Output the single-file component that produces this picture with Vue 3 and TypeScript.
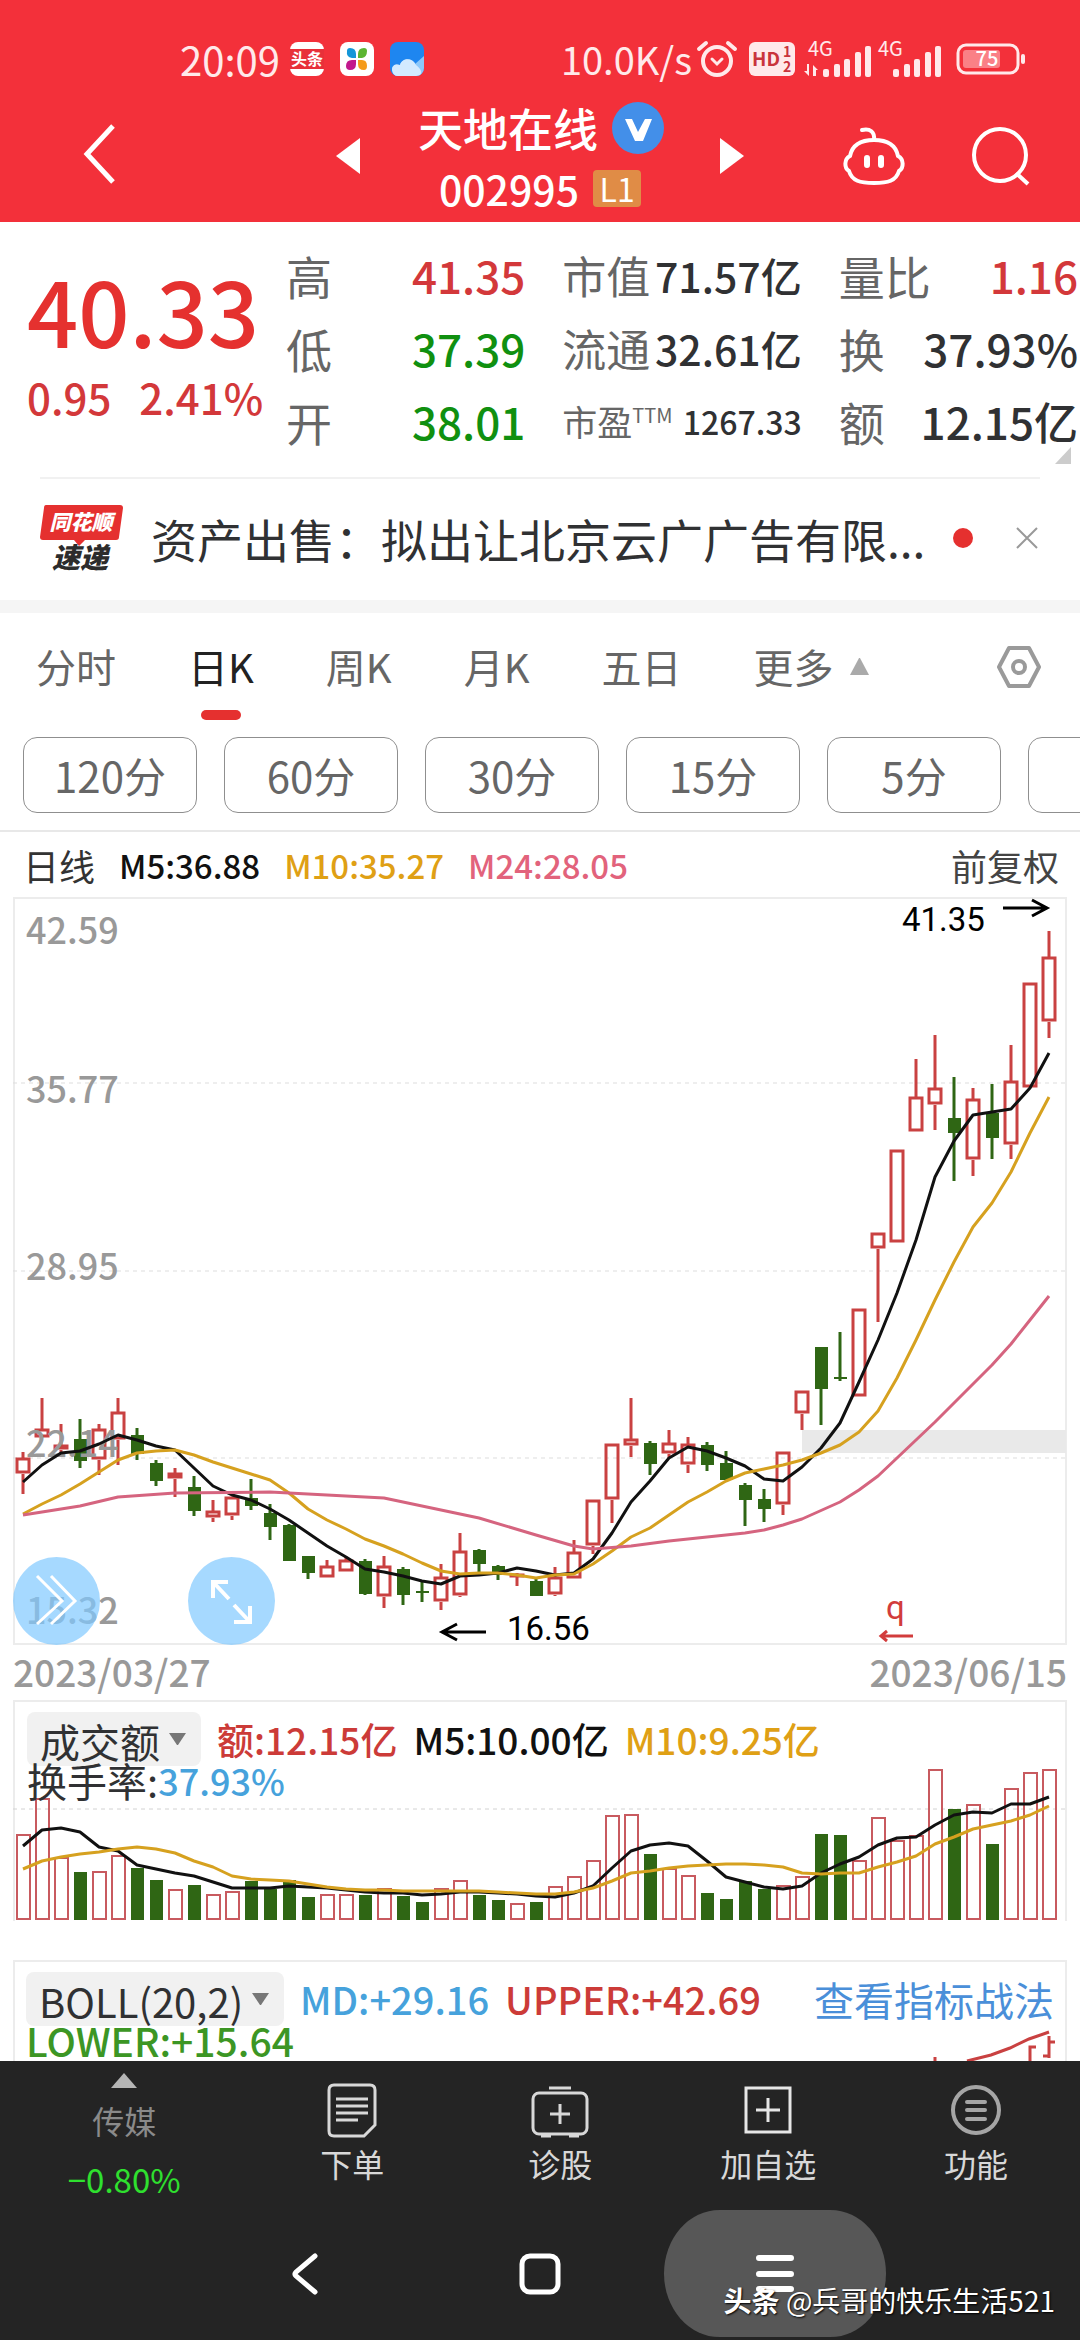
<script setup lang="ts">
import { ref } from 'vue'

type Dir = 'up' | 'down'
/** direction, wick top, body top, body bottom, wick bottom */
type Candle = [Dir, number, number, number, number]

const STEP = 19
const FIRST = 10
const cx = (i: number): number => FIRST + i * STEP

const u: Dir = 'up'
const d: Dir = 'down'

const candles: Candle[] = [
  [u, 555, 561, 577, 597], [u, 501, 532, 541, 541], [u, 527, 548, 553, 556], [d, 522, 542, 564, 571],
  [u, 527, 532, 563, 578], [u, 501, 515, 543, 568], [d, 531, 538, 557, 563], [d, 563, 566, 584, 589],
  [u, 571, 576, 582, 600], [d, 579, 590, 614, 619], [u, 603, 614, 621, 625], [u, 600, 600, 619, 623],
  [d, 582, 601, 609, 613], [d, 607, 616, 630, 643], [d, 627, 628, 664, 664], [d, 659, 659, 676, 682],
  [u, 663, 669, 681, 681], [u, 660, 663, 675, 675], [d, 662, 664, 697, 698], [u, 659, 669, 700, 711],
  [d, 670, 672, 698, 708], [d, 685, 694, 696, 705], [u, 667, 680, 705, 713], [u, 636, 654, 699, 700],
  [d, 652, 653, 667, 675], [d, 668, 669, 678, 683], [u, 676, 677, 679, 689], [d, 682, 684, 699, 699],
  [u, 670, 680, 698, 699], [u, 643, 655, 682, 682], [u, 603, 603, 649, 657], [u, 547, 547, 603, 626],
  [u, 501, 542, 549, 560], [d, 544, 546, 567, 578], [u, 533, 546, 557, 561], [u, 540, 547, 568, 576],
  [d, 545, 548, 568, 574], [d, 554, 566, 583, 583], [d, 586, 588, 603, 629], [d, 592, 602, 612, 625],
  [u, 555, 555, 608, 618], [u, 494, 494, 517, 533], [d, 450, 450, 492, 528], [d, 435, 480, 482, 484],
  [u, 412, 412, 500, 500], [u, 336, 336, 352, 425], [u, 253, 253, 346, 346], [u, 162, 200, 235, 235],
  [u, 138, 191, 208, 233], [d, 180, 221, 236, 284], [u, 191, 202, 263, 279], [d, 187, 216, 241, 262],
  [u, 148, 184, 248, 262], [u, 86, 86, 191, 191], [u, 34, 60, 125, 141],
]

const volumeTops: number[] = [
  134, 98, 157, 172, 171, 155, 168, 180, 189, 185, 194, 191, 181, 189, 180, 197, 194, 194, 195, 188,
  196, 202, 188, 180, 195, 200, 203, 202, 186, 176, 160, 115, 114, 154, 168, 175, 193, 199, 181, 189,
  185, 176, 134, 135, 160, 117, 140, 135, 69, 109, 104, 144, 88, 72, 69,
]

const ma5: number[] = [
  585, 568, 556, 554, 547, 538, 543, 549, 553, 571, 589, 598, 603, 612, 623, 636, 649, 660, 672, 675,
  679, 684, 687, 679, 678, 676, 671, 674, 678, 676, 662, 636, 605, 584, 561, 550, 554, 561, 569, 582,
  584, 570, 551, 526, 485, 443, 396, 343, 280, 244, 218, 215, 212, 191, 156,
]
const ma10: number[] = [
  617, 607, 598, 587, 575, 563, 556, 554, 553, 558, 565, 571, 577, 583, 596, 612, 623, 632, 642, 649,
  657, 666, 674, 677, 676, 676, 678, 681, 678, 677, 667, 654, 640, 631, 618, 605, 595, 584, 576, 572,
  568, 563, 556, 548, 535, 514, 481, 443, 403, 365, 330, 306, 275, 236, 200,
]
const ma24: [number, number][] = [
  [0, 618], [3, 609], [5, 600], [8, 596], [13, 595], [16, 598], [19, 601], [24, 621], [27, 638],
  [29, 649], [30, 652], [32, 649], [34, 644], [38, 636], [39, 633], [40, 628], [41, 622], [43, 605],
  [44, 593], [45, 579], [46, 561], [48, 525], [51, 468], [52, 447], [53, 423], [54, 399],
]
const vol5: number[] = [
  146, 130, 128, 132, 147, 151, 165, 169, 173, 176, 182, 188, 188, 188, 186, 187, 188, 190, 192, 193,
  193, 195, 194, 192, 192, 193, 194, 196, 197, 193, 186, 168, 151, 145, 143, 146, 161, 177, 182, 187,
  189, 186, 173, 164, 157, 145, 138, 137, 125, 115, 112, 113, 104, 104, 97,
]
const vol10: number[] = [
  169, 161, 157, 154, 152, 149, 147, 149, 153, 161, 167, 176, 179, 180, 181, 184, 187, 189, 190, 190,
  191, 191, 191, 191, 191, 192, 193, 194, 194, 192, 188, 181, 173, 171, 168, 166, 165, 164, 164, 165,
  167, 173, 174, 173, 173, 167, 162, 156, 144, 137, 129, 125, 121, 115, 106,
]

const line = (ys: number[]): string => ys.map((y, i) => `${cx(i)},${y}`).join(' ')
const linePairs = (ps: [number, number][]): string => ps.map(([i, y]) => `${cx(i)},${y}`).join(' ')

const axis = [
  { label: '42.59', y: 47 },
  { label: '35.77', y: 206 },
  { label: '28.95', y: 383 },
  { label: '22.14', y: 560 },
  { label: '15.32', y: 727 },
]

const tabs = ['分时', '日K', '周K', '月K', '五日']
const activeTab = ref('日K')
const periods = ['120分', '60分', '30分', '15分', '5分', '1分']
const volumeIndicator = ref('成交额')
const mainIndicator = ref('BOLL(20,2)')
</script>

<template>
  <div class="app" lang="zh-CN">
    <header class="top">
      <div class="status">
        <div class="status-side">
          <span class="clock">20:09</span>
          <svg class="app-icon" viewBox="0 0 34 34">
            <rect width="34" height="34" rx="8" fill="#fff" />
            <rect y="7" width="34" height="20" fill="#e8303a" />
            <text x="17" y="23" text-anchor="middle" font-size="16" font-weight="700" fill="#fff">头条</text>
          </svg>
          <svg class="app-icon" viewBox="0 0 34 34">
            <rect width="34" height="34" rx="8" fill="#fff" />
            <path d="M7 9Q7 6 10 6Q16 6 16 12V16H12Q6 15 7 9Z" fill="#1496d8" />
            <path d="M18 16V12Q18 6 24 6Q27 6 27 9Q27 15 22 16Z" fill="#5cb531" />
            <path d="M16 18V22Q16 28 10 28Q6 28 6 24Q6 18 12 18Z" fill="#c2188c" />
            <path d="M18 18H22Q27 18 27 24Q27 28 24 28Q18 28 18 22Z" fill="#f59b1a" />
          </svg>
          <svg class="app-icon" viewBox="0 0 34 34">
            <rect width="34" height="34" rx="8" fill="#1e86f0" />
            <path d="M2 28C2 22 7 22 10 23C12 16 22 15 25 22L34 14V26A8 8 0 0 1 26 34H8Q3 34 2 28Z" fill="#8cc8fb" />
            <path d="M2 28C2 22 7 22 10 23C12 16 22 15 26 23C30 26 33 30 30 33L26 34H8Q3 34 2 28Z" fill="#d3eaff" />
          </svg>
        </div>
        <div class="status-side">
          <span class="clock speed">10.0K/s</span>
          <svg class="alarm" viewBox="0 0 40 36" fill="none" stroke="#ffe9ea" stroke-width="4" stroke-linecap="round">
            <circle cx="20" cy="20" r="14" />
            <path d="M2 8L9 2M38 8L31 2" />
            <path d="M15 18l5 5 5-5" stroke-width="3" />
          </svg>
          <svg class="hd" viewBox="0 0 46 34">
            <rect width="46" height="34" rx="6" fill="#ffe9ea" />
            <g fill="#c9343c" font-weight="700">
              <text x="3" y="24" font-size="19">HD</text>
              <text x="34" y="15" font-size="14">1</text>
              <text x="34" y="30" font-size="14">2</text>
            </g>
          </svg>
          <svg class="signal" viewBox="0 0 70 36" fill="#ffe9ea">
            <text x="4" y="15" font-size="20">4G</text>
            <path d="M5 23v12l-5-5h3v-7zM9 35V24l5 5h-2v6z" />
            <rect x="19" y="28" width="6" height="8" rx="2" /><rect x="30" y="23" width="6" height="13" rx="2" />
            <rect x="40" y="18" width="6" height="18" rx="2" /><rect x="51" y="11" width="6" height="25" rx="2" />
            <rect x="61" y="5" width="6" height="31" rx="2" />
          </svg>
          <svg class="signal" viewBox="0 0 70 36" fill="#ffe9ea">
            <text x="4" y="15" font-size="20">4G</text>
            <rect x="19" y="28" width="6" height="8" rx="2" /><rect x="30" y="23" width="6" height="13" rx="2" />
            <rect x="40" y="18" width="6" height="18" rx="2" /><rect x="51" y="11" width="6" height="25" rx="2" />
            <rect x="61" y="5" width="6" height="31" rx="2" />
          </svg>
          <svg class="battery" viewBox="0 0 70 32">
            <rect x="2" y="2" width="60" height="28" rx="8" fill="none" stroke="#ffe9ea" stroke-width="3" />
            <rect x="7" y="7" width="37" height="18" rx="3" fill="#fa8086" />
            <rect x="65" y="11" width="4" height="10" rx="2" fill="#ffe9ea" />
            <text x="31" y="23" text-anchor="middle" font-size="20" font-weight="500" fill="#fff">75</text>
          </svg>
        </div>
      </div>

      <div class="nav">
        <div class="nav-left">
          <button class="icon-btn" type="button" aria-label="返回">
            <svg width="34" height="60" viewBox="0 0 34 60" fill="none" stroke="#fff" stroke-width="5">
              <path d="M30 2L4 30L30 58" />
            </svg>
          </button>
        </div>
        <div class="nav-title">
          <button class="icon-btn" type="button" aria-label="上一只">
            <svg width="24" height="36" viewBox="0 0 24 36" fill="#fff"><path d="M0 18L24 0V36Z" /></svg>
          </button>
          <div class="title">
            <div class="title-row">
              <h1>天地在线</h1>
              <svg width="53" height="53" viewBox="0 0 53 53">
                <circle cx="26" cy="26" r="26" fill="#438fe9" />
                <path d="M13 17H20L26 30L33 17H40L31 39H23Z" fill="#fff" />
              </svg>
            </div>
            <div class="code-row">
              <span class="code">002995</span>
              <span class="level">L1</span>
            </div>
          </div>
          <button class="icon-btn" type="button" aria-label="下一只">
            <svg width="24" height="36" viewBox="0 0 24 36" fill="#fff"><path d="M24 18L0 0V36Z" /></svg>
          </button>
        </div>
        <div class="nav-right">
          <button class="icon-btn" type="button" aria-label="智能助手">
            <svg width="64" height="60" viewBox="0 0 64 60" fill="none" stroke="#fff" stroke-width="4" stroke-linecap="round">
              <path d="M20 4C28 2 33 6 32 14" />
              <path d="M32 14C46 14 54 20 56 30C62 33 62 42 57 45C54 55 46 57 32 57C18 57 10 55 7 45C2 42 2 33 8 30C10 20 18 14 32 14Z" />
              <path d="M25 32V39M39 32V39" stroke-width="6" />
            </svg>
          </button>
          <button class="icon-btn" type="button" aria-label="搜索">
            <svg width="58" height="60" viewBox="0 0 58 60" fill="none" stroke="#fff" stroke-width="4">
              <circle cx="28" cy="29" r="26" />
              <path d="M44 47L56 58" />
            </svg>
          </button>
        </div>
      </div>
    </header>

    <section class="quote">
      <div class="price">
        <div class="last">40.33</div>
        <div class="change"><span>0.95</span><span>2.41%</span></div>
      </div>
      <dl class="stats">
        <div class="stat"><dt>高</dt><dd class="red">41.35</dd></div>
        <div class="stat"><dt>低</dt><dd class="green">37.39</dd></div>
        <div class="stat"><dt>开</dt><dd class="green">38.01</dd></div>
      </dl>
      <dl class="stats mid">
        <div class="stat"><dt>市值</dt><dd>71.57亿</dd></div>
        <div class="stat"><dt>流通</dt><dd>32.61亿</dd></div>
        <div class="stat small"><dt>市盈<sup>TTM</sup></dt><dd>1267.33</dd></div>
      </dl>
      <dl class="stats">
        <div class="stat"><dt>量比</dt><dd class="red">1.16</dd></div>
        <div class="stat"><dt>换</dt><dd>37.93%</dd></div>
        <div class="stat"><dt>额</dt><dd>12.15亿</dd></div>
      </dl>
      <svg class="corner" viewBox="0 0 16 17" fill="#cccccc"><path d="M16 0V17H0Z" /></svg>
    </section>

    <section class="news">
      <svg class="logo" width="84" height="66" viewBox="0 0 84 66">
        <path d="M6 0H80Q83 0 83 3L79 32Q79 35 76 35H45L39 41L34 35H3Q0 35 0 32L4 3Q4 0 6 0Z" fill="#e5302f" />
        <g font-style="italic" font-weight="900" text-anchor="middle">
          <text x="41" y="25" font-size="21" fill="#fff">同花顺</text>
          <text x="40" y="63" font-size="28" fill="#2c2c2c">速递</text>
        </g>
      </svg>
      <a class="headline" href="#news">资产出售：拟出让北京云广广告有限...</a>
      <span class="dot"></span>
      <button class="icon-btn" type="button" aria-label="关闭">
        <svg width="22" height="22" viewBox="0 0 22 22" stroke="#999" stroke-width="2"><path d="M1 1L21 21M21 1L1 21" /></svg>
      </button>
    </section>

    <nav class="tabs">
      <button
        v-for="t in tabs"
        :key="t"
        type="button"
        class="tab"
        :class="{ active: t === activeTab }"
        @click="activeTab = t"
      >{{ t }}</button>
      <button type="button" class="tab more">
        更多
        <svg width="19" height="17" viewBox="0 0 19 17" fill="#aaaaaa"><path d="M9 0H10L19 17H0Z" /></svg>
      </button>
      <button class="icon-btn settings" type="button" aria-label="设置">
        <svg width="46" height="44" viewBox="0 0 46 44" fill="none" stroke="#9a9a9a" stroke-width="4" stroke-linejoin="round">
          <path d="M13 3H33L43 22L33 41H13L3 22Z" />
          <circle cx="23" cy="22" r="6" />
        </svg>
      </button>
    </nav>

    <div class="periods">
      <button v-for="p in periods" :key="p" type="button" class="period">{{ p }}</button>
    </div>

    <div class="ma-row">
      <span class="dark">日线</span>
      <span class="num black">M5:36.88</span>
      <span class="num gold">M10:35.27</span>
      <span class="num pink">M24:28.05</span>
      <button class="adjust" type="button">前复权</button>
    </div>

    <section class="chart-wrap">
      <svg class="chart" viewBox="0 0 1054 748">
        <rect x="1" y="1" width="1052" height="746" fill="none" stroke="#ececec" stroke-width="2" />
        <g stroke="#dddddd" stroke-width="1" stroke-dasharray="4 4">
          <path d="M0 186H1054M0 374H1054M0 561H1054" />
        </g>
        <rect x="789" y="533" width="264" height="23" fill="#e9e9e9" />
        <g v-for="(c, i) in candles" :key="i">
          <template v-if="c[0] === 'up'">
            <path :d="`M${cx(i)} ${c[1]}V${c[2]}M${cx(i)} ${c[3]}V${c[4]}`" stroke="#c94141" stroke-width="3" />
            <rect
              :x="cx(i) - 6" :y="c[2] + 1" width="12" :height="Math.max(c[3] - c[2] - 3, 1)"
              fill="none" stroke="#c94141" stroke-width="3"
            />
          </template>
          <template v-else>
            <path :d="`M${cx(i)} ${c[1]}V${c[4]}`" stroke="#2f6614" stroke-width="3" />
            <rect :x="cx(i) - 6" :y="c[2]" width="13" :height="c[3] - c[2]" fill="#2f6614" />
          </template>
        </g>
        <g class="axis" font-size="36" font-weight="500" fill="#999999">
          <text v-for="a in axis" :key="a.label" x="13" :y="a.y">{{ a.label }}</text>
        </g>
        <g fill="none" stroke-width="3" stroke-linejoin="round">
          <polyline :points="line(ma5)" stroke="#111111" />
          <polyline :points="line(ma10)" stroke="#d6a11f" />
          <polyline :points="linePairs(ma24)" stroke="#d5647f" />
        </g>
        <g class="mark" font-size="33" fill="#000">
          <text x="889" y="34">41.35</text>
          <text x="494" y="743">16.56</text>
          <text x="873" y="722" fill="#d23c3c">q</text>
        </g>
        <g fill="none" stroke="#000" stroke-width="3">
          <path d="M990 11H1034M1019 3L1034 11L1019 19" />
          <path d="M473 735H429M444 727L429 735L444 743" />
          <path d="M900 739H868M874 734L868 739L874 744" stroke="#d23c3c" />
        </g>
      </svg>
      <div class="float-btns">
        <button class="round" type="button" aria-label="展开">
          <svg width="86" height="86" viewBox="0 0 86 86" fill="none" stroke="#fff" stroke-width="3">
            <path d="M24 18L49 43L24 66M38 18L62 43L38 66" />
          </svg>
        </button>
        <button class="round" type="button" aria-label="全屏">
          <svg width="86" height="86" viewBox="0 0 86 86" fill="none" stroke="#fff" stroke-width="4">
            <path d="M40 24H25V40M25 24L41 41M46 64H62V48M62 64L46 47" />
          </svg>
        </button>
      </div>
      <div class="dates"><span>2023/03/27</span><span>2023/06/15</span></div>
    </section>

    <section class="volume">
      <svg class="chart" viewBox="0 0 1054 221">
        <path d="M1 221V1H1053V221" fill="none" stroke="#ececec" stroke-width="2" />
        <path d="M0 109H1054" stroke="#d2d2d2" stroke-dasharray="4 4" />
        <g v-for="(top, i) in volumeTops" :key="i">
          <rect
            v-if="candles[i][0] === 'up'"
            :x="cx(i) - 6" :y="top + 1" width="13" :height="218 - top"
            fill="none" stroke="#c85a5f" stroke-width="2"
          />
          <rect v-else :x="cx(i) - 6" :y="top" width="13" :height="220 - top" fill="#2f6614" />
        </g>
        <g fill="none" stroke-width="3" stroke-linejoin="round">
          <polyline :points="line(vol5)" stroke="#111111" />
          <polyline :points="line(vol10)" stroke="#d6a11f" />
        </g>
      </svg>
      <div class="legend">
        <label class="chip">
          <select v-model="volumeIndicator" class="w-vol" aria-label="副图指标一">
            <option>成交额</option>
          </select>
          <svg width="17" height="12" viewBox="0 0 17 12" fill="#777"><path d="M0 0H17L9 12H8Z" /></svg>
        </label>
        <span class="crimson">额:12.15亿</span>
        <span class="black">M5:10.00亿</span>
        <span class="gold">M10:9.25亿</span>
      </div>
      <div class="turnover"><span class="label">换手率:</span><span class="sky">37.93%</span></div>
    </section>

    <section class="boll">
      <div class="legend">
        <label class="chip">
          <select v-model="mainIndicator" class="w-boll" aria-label="副图指标二">
            <option>BOLL(20,2)</option>
          </select>
          <svg width="17" height="12" viewBox="0 0 17 12" fill="#777"><path d="M0 0H17L9 12H8Z" /></svg>
        </label>
        <span class="sky">MD:+29.16</span>
        <span class="crimson">UPPER:+42.69</span>
        <a class="tactics" href="#tactics">查看指标战法</a>
      </div>
      <div class="lower">LOWER:+15.64</div>
      <svg class="chart boll-chart" viewBox="0 0 1054 100" fill="none" stroke="#c94141" stroke-width="3">
        <path d="M954 100L978 94L997 87L1016 78L1036 71" />
        <path d="M1017 100V86H1023M1036 75V97M1036 81H1042M1036 95H1030M922 96V100" />
      </svg>
    </section>

    <footer class="bottom">
      <div class="actions">
        <button class="sector" type="button">
          <svg width="26" height="15" viewBox="0 0 26 15" fill="#b5b5b5"><path d="M13 0L26 15H0Z" /></svg>
          <span class="sector-name">传媒</span>
          <span class="sector-change">−0.80%</span>
        </button>
        <button class="action" type="button">
          <svg width="56" height="56" viewBox="0 0 56 56" fill="none" stroke="#d8d8d8" stroke-width="3">
            <path d="M10 2H46Q51 2 51 7V42L40 53H10Q5 53 5 48V7Q5 2 10 2Z" />
            <path d="M12 16H44M12 23H44M12 30H44M12 37H34" />
          </svg>
          <span>下单</span>
        </button>
        <button class="action" type="button">
          <svg width="58" height="56" viewBox="0 0 58 56" fill="none" stroke="#d8d8d8" stroke-width="3">
            <rect x="2" y="10" width="54" height="41" rx="6" />
            <path d="M18 5H40M29 21V41M19 31H39M10 53H20M38 53H48" />
          </svg>
          <span>诊股</span>
        </button>
        <button class="action" type="button">
          <svg width="56" height="56" viewBox="0 0 56 56" fill="none" stroke="#e6e6e6" stroke-width="3">
            <rect x="6" y="5" width="44" height="44" />
            <path d="M28 15V39M16 27H40" />
          </svg>
          <span>加自选</span>
        </button>
        <button class="action" type="button">
          <svg width="56" height="56" viewBox="0 0 56 56" fill="none" stroke="#a5a5a5" stroke-width="4" stroke-linecap="round">
            <circle cx="28" cy="27" r="23" />
            <path d="M19 19H37M19 27H37M19 36H37" />
          </svg>
          <span>功能</span>
        </button>
      </div>
      <div class="system">
        <button class="sys-btn" type="button" aria-label="后退">
          <svg width="28" height="42" viewBox="0 0 28 42" fill="none" stroke="#fff" stroke-width="5" stroke-linecap="round">
            <path d="M24 3L5 19Q3 21 5 23L24 39" />
          </svg>
        </button>
        <button class="sys-btn" type="button" aria-label="主页">
          <svg width="42" height="42" viewBox="0 0 42 42" fill="none" stroke="#fff" stroke-width="5">
            <rect x="3" y="3" width="36" height="36" rx="8" />
          </svg>
        </button>
        <button class="sys-btn pill" type="button" aria-label="最近任务">
          <svg width="40" height="40" viewBox="0 0 40 40" stroke="#fff" stroke-width="6" stroke-linecap="round">
            <path d="M4 4H36M4 20H36M4 35H36" />
          </svg>
        </button>
      </div>
      <div class="watermark"><b>头条</b> @兵哥的快乐生活521</div>
    </footer>
  </div>
</template>

<style>
body {
  background: #fff;
}
</style>

<style scoped>
* {
  box-sizing: border-box;
}
.app {
  font-family: "Noto Sans CJK SC", "Noto Sans", sans-serif;
  color: #303133;
  background: #fff;
  overflow: hidden;
  white-space: nowrap;
}
button {
  font-family: inherit;
  color: inherit;
  background: none;
  border: 0;
  padding: 0;
}
a {
  color: inherit;
  text-decoration: none;
}
svg {
  display: block;
  flex: none;
  overflow: visible;
}
.icon-btn {
  display: block;
}
h1,
dl,
dd {
  margin: 0;
}

.top {
  height: 222px;
  padding-top: 34px;
  background: #f3303a;
  color: #fff;
}
.status {
  display: flex;
  justify-content: space-between;
  padding: 0 54px 0 180px;
  height: 50px;
}
.status-side {
  display: flex;
  align-items: center;
}
.clock {
  font-size: 40px;
  line-height: 50px;
  color: #ffe9ea;
}
.speed {
  font-size: 38px;
}
.app-icon {
  width: 34px;
  height: 34px;
  margin-left: 10px;
  margin-right: 6px;
}
.alarm {
  width: 40px;
  height: 36px;
  margin-left: 5px;
}
.hd {
  width: 46px;
  height: 34px;
  margin: 0 9px 0 12px;
}
.signal {
  width: 70px;
  height: 36px;
}
.battery {
  width: 70px;
  height: 32px;
  margin-left: 12px;
}
.nav {
  display: grid;
  grid-template-columns: 1fr 408px 1fr;
  height: 138px;
}
.nav-left {
  padding: 40px 0 0 83px;
}
.nav-title {
  display: flex;
  justify-content: space-between;
  align-items: center;
  padding-top: 6px;
}
.title {
  display: flex;
  flex-direction: column;
  align-items: center;
}
.title-row {
  display: flex;
  align-items: center;
  gap: 14px;
  height: 64px;
  padding-left: 3px;
}
h1 {
  font-size: 45px;
  font-weight: 500;
  line-height: 64px;
}
.code-row {
  display: flex;
  align-items: center;
  gap: 14px;
  height: 56px;
}
.code {
  font-size: 41px;
  line-height: 56px;
  font-weight: 500;
}
.level {
  width: 48px;
  background: #e08c46;
  border-radius: 4px;
  font-size: 32px;
  line-height: 37px;
  text-align: center;
}
.nav-right {
  display: flex;
  justify-content: flex-end;
  align-items: flex-start;
  gap: 66px;
  padding: 42px 50px 0 0;
}

.quote {
  position: relative;
  display: grid;
  grid-template-columns: 222px 1fr 1fr 1fr;
  column-gap: 37px;
  height: 257px;
  padding: 16px 2px 0 27px;
}
.quote::after {
  content: "";
  position: absolute;
  left: 40px;
  right: 40px;
  bottom: 0;
  height: 2px;
  background: #f1f1f1;
}
.price {
  color: #e5312f;
  padding-top: 12px;
}
.last {
  font-size: 90px;
  font-weight: 500;
  line-height: 118px;
}
.change {
  display: flex;
  gap: 28px;
  font-size: 42px;
  font-weight: 500;
  line-height: 58px;
  color: #d3383a;
}
.stat {
  display: flex;
  justify-content: space-between;
  align-items: center;
  height: 73px;
  font-size: 46px;
}
.stat dt {
  color: #666;
}
.stat dd {
  font-size: 44px;
  font-weight: 500;
}
.mid .stat {
  font-size: 44px;
}
.mid .stat dd {
  font-size: 41px;
}
.mid .small {
  font-size: 35px;
}
.small sup {
  font-size: 20px;
  line-height: 20px;
}
.mid .small dd {
  font-size: 32px;
}
.red {
  color: #d3383a;
}
.green {
  color: #109010;
}
.corner {
  position: absolute;
  right: 9px;
  bottom: 15px;
  width: 16px;
  height: 17px;
}

.news {
  display: flex;
  align-items: center;
  height: 134px;
  padding: 0 42px 3px 40px;
  border-bottom: 13px solid #f5f5f5;
}
.headline {
  flex: 1;
  margin-left: 27px;
  font-size: 46px;
  line-height: 66px;
}
.dot {
  width: 20px;
  height: 20px;
  margin-right: 43px;
  border-radius: 50%;
  background: #e5302f;
}

.tabs {
  display: flex;
  align-items: flex-start;
  gap: 72px;
  height: 124px;
  padding: 24px 38px 0 36px;
}
.tab {
  position: relative;
  font-size: 40px;
  line-height: 58px;
  color: #666;
}
.tab.active {
  color: #222;
}
.tab.active::after {
  content: "";
  position: absolute;
  left: 50%;
  top: 73px;
  width: 40px;
  height: 10px;
  margin-left: -20px;
  border-radius: 5px;
  background: #e5302f;
}
.more {
  display: flex;
  align-items: center;
  gap: 16px;
}
.settings {
  margin: 8px 0 0 auto;
}

.periods {
  display: flex;
  gap: 27px;
  height: 95px;
  padding-left: 23px;
  border-bottom: 2px solid #e8e8e8;
  overflow: hidden;
}
.period {
  flex: none;
  width: 174px;
  height: 76px;
  border: 1px solid #8f8f8f;
  border-radius: 14px;
  font-size: 42px;
  line-height: 70px;
  color: #666;
}

.ma-row {
  display: flex;
  align-items: center;
  gap: 24px;
  height: 65px;
  padding: 0 21px 0 23px;
  font-size: 36px;
  line-height: 52px;
}
.num {
  font-size: 33px;
  font-weight: 500;
}
.adjust {
  margin-left: auto;
  font-size: 36px;
  color: #444;
}
.dark {
  color: #333;
}
.black {
  color: #111;
}
.gold {
  color: #dfa015;
}
.pink {
  color: #e2637c;
}
.sky {
  color: #46a2dc;
}
.crimson {
  color: #cc3b38;
}

.chart-wrap,
.volume,
.boll {
  position: relative;
  padding: 0 13px;
}
.chart {
  width: 100%;
  height: auto;
}
.mark {
  font-family: Roboto, sans-serif;
}
.float-btns {
  position: absolute;
  left: 13px;
  bottom: 55px;
  display: flex;
  gap: 88px;
}
.round {
  width: 87px;
  height: 88px;
  border-radius: 50%;
  background: rgba(128, 201, 255, 0.7);
}
.dates {
  display: flex;
  justify-content: space-between;
  height: 55px;
  font-size: 37px;
  font-weight: 500;
  line-height: 52px;
  color: #999;
}

.legend {
  display: flex;
  align-items: center;
  gap: 16px;
  height: 54px;
  font-size: 38px;
  font-weight: 500;
  line-height: 54px;
}
.volume {
  height: 260px;
}
.volume .legend,
.turnover {
  position: absolute;
  left: 27px;
  top: 12px;
}
.volume .legend {
  font-size: 37px;
}
.chip {
  position: relative;
  display: flex;
  align-items: center;
  height: 54px;
  padding-right: 15px;
  border-radius: 8px;
  background: #f1f1f1;
}
.chip select {
  appearance: none;
  height: 54px;
  border: 0;
  padding: 0 0 0 13px;
  background: none;
  font-family: inherit;
  font-size: 40px;
  color: #303133;
}
.w-vol {
  width: 142px;
}
.w-boll {
  width: 226px;
}
.volume .turnover {
  top: 53px;
  display: flex;
  align-items: center;
  height: 54px;
}
.turnover .label {
  font-size: 40px;
}
.turnover .sky {
  font-size: 36px;
  font-weight: 500;
}
.boll {
  height: 101px;
  overflow: hidden;
}
.boll::before {
  content: "";
  position: absolute;
  inset: 0 13px;
  border: 2px solid #ececec;
  border-bottom: 0;
}
.boll .legend {
  position: relative;
  padding: 0 13px;
  margin-top: 12px;
}
.tactics {
  margin-left: auto;
  font-size: 40px;
  font-weight: 400;
  color: #4a8fd9;
}
.lower {
  position: relative;
  padding-left: 13px;
  font-size: 39px;
  font-weight: 500;
  line-height: 28px;
  color: #3c9624;
}
.boll-chart {
  position: absolute;
  left: 13px;
  right: 13px;
  bottom: 0;
  width: auto;
}

.bottom {
  position: relative;
  background: #242424;
  color: #d8d8d8;
}
.actions {
  display: flex;
  height: 149px;
}
.sector {
  flex: 0 0 23%;
  display: flex;
  flex-direction: column;
  align-items: center;
  padding-top: 12px;
}
.sector-name {
  margin-top: 8px;
  font-size: 32px;
  line-height: 48px;
  color: #8a8a8a;
}
.sector-change {
  margin-top: 10px;
  font-size: 33px;
  line-height: 50px;
  color: #2fe02f;
}
.action {
  flex: 1;
  display: flex;
  flex-direction: column;
  align-items: center;
  padding-top: 22px;
  font-size: 32px;
  line-height: 48px;
}
.system {
  display: flex;
  align-items: flex-start;
  gap: 13px;
  height: 130px;
  padding: 0 18%;
}
.sys-btn {
  flex: 1;
  height: 127px;
  display: flex;
  align-items: center;
  justify-content: center;
}
.pill {
  background: #575757;
  border-radius: 56px / 64px;
}
.watermark {
  position: absolute;
  right: 25px;
  bottom: 20px;
  font-size: 28px;
  line-height: 40px;
  color: #fff;
  text-shadow: 1px 1px 2px #000;
}
</style>
